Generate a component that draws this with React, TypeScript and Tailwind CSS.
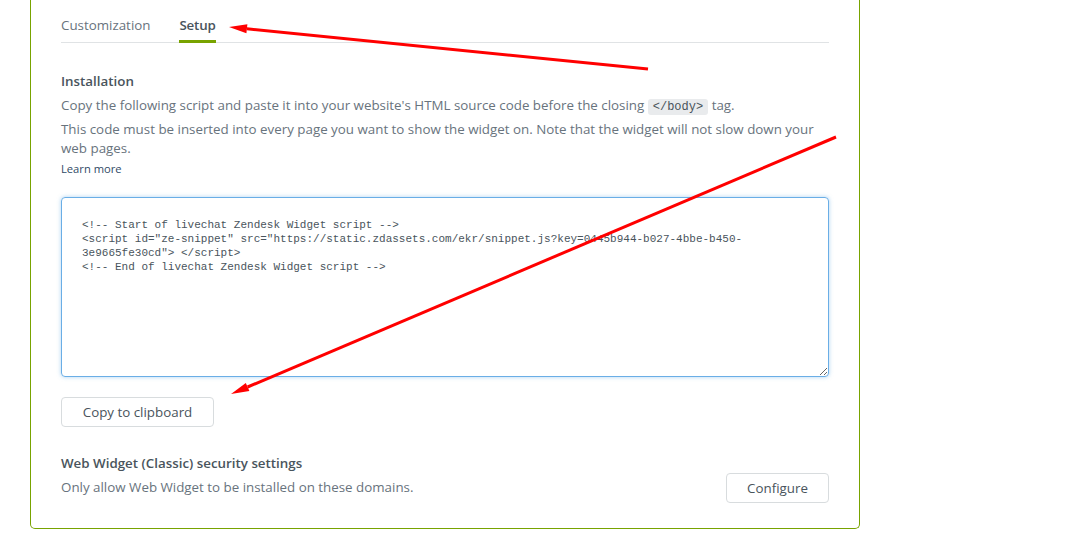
const snippet = `<!-- Start of livechat Zendesk Widget script -->
<script id="ze-snippet" src="https://static.zdassets.com/ekr/snippet.js?key=0445b944-b027-4bbe-b450-3e9665fe30cd"> </script>
<!-- End of livechat Zendesk Widget script -->`

function Arrows() {
  return (
    <svg className="absolute inset-0 pointer-events-none" width="1073" height="557">
      <line x1="648" y1="69" x2="246.9" y2="28.8" stroke="#f00" strokeWidth="3" />
      <polygon points="229,27 247.4,24.3 246.4,33.3" fill="#f00" />
      <line x1="836" y1="137" x2="247.6" y2="387" stroke="#f00" strokeWidth="3" />
      <polygon points="231,394 249.4,391.1 245.8,382.9" fill="#f00" />
    </svg>
  )
}

export default function App() {
  return (
    <div className="relative w-full h-[557px] bg-white overflow-hidden font-['Open_Sans',sans-serif] text-[13.35px] text-[#68737d]">
      <div className="ml-[30px] w-[830px] border-x border-b border-[#78a300] rounded-b-[5px] px-[30px] pb-[25px]">
        {/* tabs */}
        <div className="flex gap-[29px] pt-[15px] border-b border-[#e0e3e5]">
          <div className="pb-[5px] border-b-[3px] border-transparent -mb-px leading-[20px]">Customization</div>
          <div className="pb-[5px] border-b-[3px] border-[#78a300] -mb-px leading-[20px] font-semibold text-[#49545c] tracking-[-0.2px]">Setup</div>
        </div>

        <div className="mt-[28px] leading-[20px] font-semibold text-[#49545c]">Installation</div>
        <p className="mt-[4px] leading-[20px]">
          Copy the following script and paste it into your website's HTML source code before the closing{' '}
          <code className="px-[5px] py-[1px] rounded-[3px] bg-[#e9ebed] text-[#49545c] font-['Liberation_Mono',monospace] text-[12px]">&lt;/body&gt;</code>{' '}
          tag.
        </p>
        <p className="mt-[3px] leading-[19px]">
          This code must be inserted into every page you want to show the widget on. Note that the widget will not slow down your web pages.
        </p>
        <a className="block mt-[3px] text-[11.2px] leading-[16px] text-[#2f4a66]">Learn more</a>

        <textarea
          readOnly
          defaultValue={snippet}
          className="block mt-[20px] w-full h-[180px] px-[20px] pt-[20px] border border-[#6aaee6] rounded-[4px] shadow-[0_0_4px_rgba(106,174,230,0.55)] outline-none font-['Liberation_Mono',monospace] text-[11px] leading-[14px] text-[#49545c] resize-y"
        />

        <button className="mt-[20px] h-[30px] w-[153px] border border-[#d8dcde] rounded-[4px] bg-white text-[#49545c]">
          Copy to clipboard
        </button>

        <div className="mt-[26px] flex items-end justify-between">
          <div className="mb-[6px]">
            <div className="leading-[20px] font-semibold text-[#49545c]">Web Widget (Classic) security settings</div>
            <div className="mt-[4px] leading-[20px]">Only allow Web Widget to be installed on these domains.</div>
          </div>
          <button className="h-[30px] w-[103px] border border-[#d8dcde] rounded-[4px] bg-white text-[#49545c]">
            Configure
          </button>
        </div>
      </div>
      <Arrows />
    </div>
  )
}
